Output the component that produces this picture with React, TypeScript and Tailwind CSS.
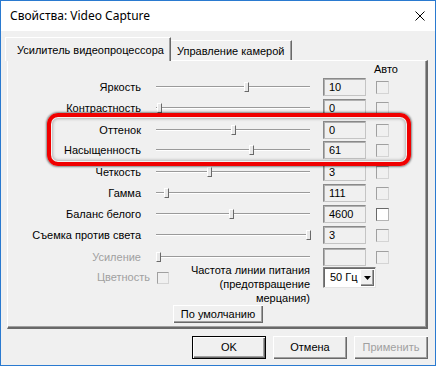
import React from "react";

type Row = {
  label: string;
  value: string;
  thumb: number;
  gap: string;
  disabled?: boolean;
  checkWhite?: boolean;
};

const rows: Row[] = [
  { label: "Яркость", value: "10", thumb: 88, gap: "mt-0" },
  { label: "Контрастность", value: "0", thumb: 1, gap: "mt-[3px]" },
  { label: "Оттенок", value: "0", thumb: 75, gap: "mt-[4px]" },
  { label: "Насыщенность", value: "61", thumb: 93, gap: "mt-[2px]" },
  { label: "Четкость", value: "3", thumb: 51, gap: "mt-[4px]" },
  { label: "Гамма", value: "111", thumb: 8, gap: "mt-[3px]" },
  { label: "Баланс белого", value: "4600", thumb: 73, gap: "mt-[3px]", checkWhite: true },
  { label: "Съемка против света", value: "3", thumb: 150, gap: "mt-[3px]" },
  { label: "Усиление", value: "", thumb: 0, gap: "mt-[4px]", disabled: true },
];

const raised =
  "shadow-[inset_1px_1px_#ffffff,inset_-1px_-1px_#696969,inset_-2px_-2px_#a0a0a0]";

const CheckBox = ({ white }: { white?: boolean }) => (
  <div
    className={
      white
        ? "w-[13px] h-[13px] bg-white border border-t-[#696969] border-l-[#696969] border-r-[#b4b4b4] border-b-[#b4b4b4]"
        : "w-[13px] h-[13px] bg-[#f0f0f0] border border-t-[#a0a0a0] border-l-[#a0a0a0] border-r-[#d4d4d4] border-b-[#d4d4d4]"
    }
  />
);

const Slider = ({ pos }: { pos: number }) => (
  <div className="relative w-[154px] h-[12px] flex items-center">
    <div className="w-full h-[2px] bg-[#9a9a9a] border-b border-b-[#ffffff]" />
    <div
      className="absolute top-[1px] w-[5px] h-[10px] bg-[#e8e8e8] border-l border-t border-l-white border-t-white border-r border-b border-r-[#696969] border-b-[#696969]"
      style={{ left: pos }}
    />
  </div>
);

const SliderRow = ({ row }: { row: Row }) => (
  <div className={`flex items-center h-[18px] ${row.gap}`}>
    <div
      className={
        row.disabled
          ? "w-[133px] text-right text-[#a0a0a0]"
          : "w-[133px] text-right text-black"
      }
    >
      {row.label}
    </div>
    <div className="ml-[15px]">
      <Slider pos={row.thumb} />
    </div>
    <div className="ml-[13px] w-[43px] h-[18px] flex items-center pl-[5px] border border-t-[#8a8a8a] border-l-[#8a8a8a] border-r-[#c4c4c4] border-b-[#c4c4c4] shadow-[inset_1px_1px_#b0b0b0]">
      {row.value}
    </div>
    <div className="ml-[10px]">
      <CheckBox white={row.checkWhite} />
    </div>
  </div>
);

export default function App() {
  return (
    <div
      className="relative w-[436px] h-[366px] border border-[#2a7ad0] flex flex-col text-[11px] text-black bg-[#f0f0f0]"
      style={{ fontFamily: '"Liberation Sans", Arial, sans-serif' }}
    >
      <div className="h-[30px] bg-white flex items-center justify-between pl-[9px] pr-[10px]">
        <span
          className="text-[12px] text-black"
          style={{ fontFamily: '"Noto Sans", "Open Sans", sans-serif' }}
        >
          Свойства: Video Capture
        </span>
        <svg width="10" height="10" viewBox="0 0 10 10">
          <path d="M0.5 0.5 L9.5 9.5 M9.5 0.5 L0.5 9.5" stroke="#000" strokeWidth="1" />
        </svg>
      </div>

      <div className="flex-1 flex flex-col pt-[6px] pl-[4px] pr-[7px]">
        <div className="flex items-end h-[23px]">
          <div className="relative z-10 h-[24px] -mb-px w-[166px] bg-[#f0f0f0] border-l border-t border-white border-r border-r-[#696969] shadow-[inset_-1px_0_#a0a0a0] pl-[11px] pt-[4px]">
            Усилитель видеопроцессора
          </div>
          <div className="h-[20px] w-[121px] border-t border-white border-r border-r-[#696969] shadow-[inset_-1px_0_#a0a0a0] pl-[6px] pt-[2px]">
            Управление камерой
          </div>
        </div>

        <div className="ml-[2px] h-[269px] w-[421px] border-l border-t border-white border-r-2 border-b-2 border-r-[#696969] border-b-[#696969] shadow-[inset_-1px_-1px_#a0a0a0] flex flex-col">
          <div className="h-[17px] flex items-center pl-[366px]">Авто</div>
          {rows.map((r) => (
            <SliderRow key={r.label} row={r} />
          ))}

          <div className="flex -mt-[3px]">
            <div className="flex items-center mt-[8px] h-[13px] self-start">
              <span className="w-[142px] text-right text-[#a0a0a0]">Цветность</span>
              <div className="ml-[7px] w-[12px] h-[12px] border border-t-[#a0a0a0] border-l-[#a0a0a0] border-r-[#d4d4d4] border-b-[#d4d4d4]" />
            </div>
            <div className="w-[141px] text-right leading-[14px]">
              Частота линии питания
              <br />
              (предотвращение
              <br />
              мерцания)
            </div>
            <div className="ml-[13px] mt-[4px] self-start w-[53px] h-[21px] bg-white flex items-center border border-t-[#808080] border-l-[#808080] border-r-[#e3e3e3] border-b-[#e3e3e3] shadow-[inset_1px_1px_#696969]">
              <span className="pl-[6px] flex-1">50 Гц</span>
              <div className={`w-[14px] h-[17px] mr-[1px] bg-[#f0f0f0] flex items-center justify-center ${raised}`}>
                <svg width="7" height="4" viewBox="0 0 7 4">
                  <path d="M0 0 H7 L3.5 4 Z" fill="#000" />
                </svg>
              </div>
            </div>
          </div>

          <div className="pl-[165px]">
            <button className={`w-[90px] h-[18px] bg-[#f0f0f0] text-black ${raised}`}>
              По умолчанию
            </button>
          </div>
        </div>

        <div className="flex justify-end gap-[7px] mt-[7px]">
          <button className={`w-[74px] h-[23px] bg-[#f0f0f0] border border-black ${raised}`}>
            OK
          </button>
          <button className={`w-[74px] h-[23px] bg-[#f0f0f0] ${raised}`}>Отмена</button>
          <button className={`w-[74px] h-[23px] bg-[#f0f0f0] text-[#a0a0a0] ${raised}`}>
            Применить
          </button>
        </div>
      </div>

      <div className="absolute left-[46px] top-[112px] w-[364px] h-[53px] rounded-[11px] border-[4px] border-[#f00000] shadow-[0_0_2px_1px_rgba(0,0,0,0.45),inset_0_0_0_1px_rgba(255,255,255,0.8),inset_0_0_3px_2px_rgba(0,0,0,0.25)]" />
    </div>
  );
}
